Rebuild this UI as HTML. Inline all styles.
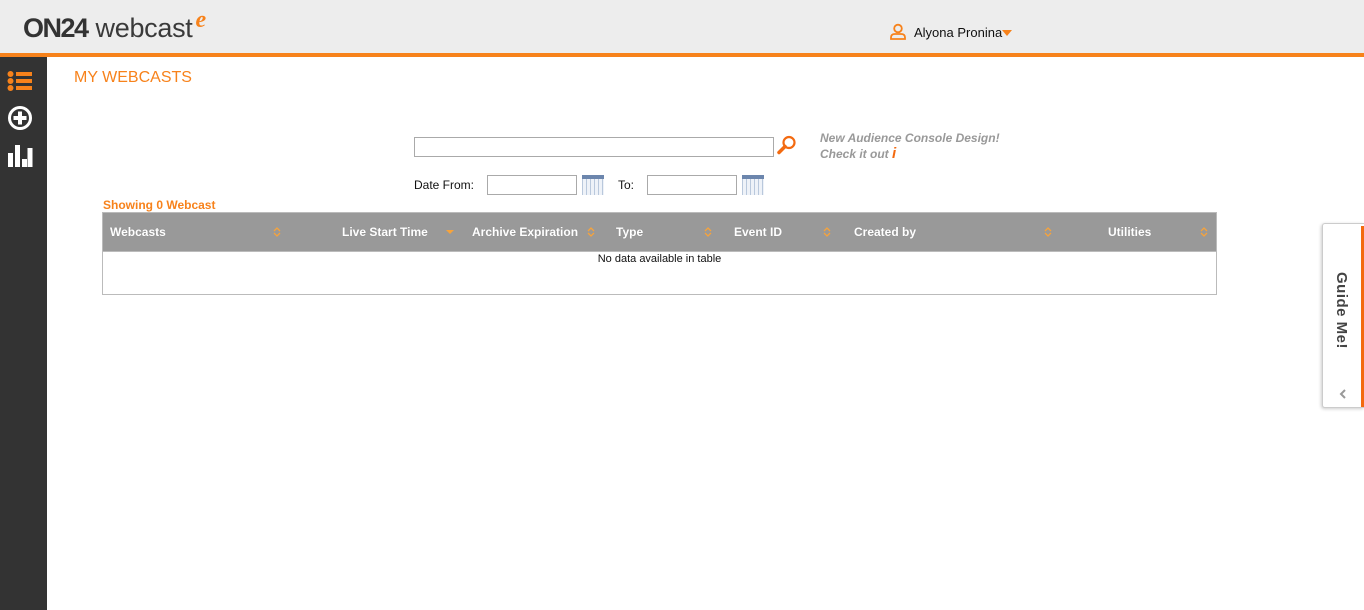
<!DOCTYPE html>
<html><head><meta charset="utf-8"><style>
*{margin:0;padding:0;box-sizing:border-box}
body{width:1364px;height:610px;overflow:hidden;background:#fff;font-family:"Liberation Sans",Arial,sans-serif;position:relative}
.hdr{position:absolute;left:0;top:0;width:1364px;height:53px;background:#ededed}
.bar{position:absolute;left:0;top:53px;width:1364px;height:4px;background:#f7821b}
.side{position:absolute;left:0;top:57px;width:47px;height:553px;background:#333}
.abs{position:absolute}
.th{position:absolute;top:0;height:39px;line-height:39px;color:#fff;font-weight:bold;font-size:12px;text-shadow:0 0 1px #888}
.sort{position:absolute;top:13px;width:8px;height:12px}
input.t{position:absolute;border:1px solid #aaa;background:#fff;height:20px}
.cal{position:absolute;width:22px;height:20px;background:repeating-linear-gradient(90deg,#b9c8dc 0 1px,#eef2f8 1px 4px),#eef2f8;border-top:4px solid #6c86ad}
</style></head><body>
<div class="hdr"></div><div class="bar"></div>
<div class="abs" style="left:23px;top:13px;font-size:27px;color:#333;white-space:nowrap"><b style="font-weight:bold;letter-spacing:-1.5px">ON24</b><span style="color:#3a3a3a;margin-left:8px;letter-spacing:-0.3px">webcast</span><i style="color:#f7821b;font-family:'Liberation Serif',serif;font-weight:bold;font-size:24px;position:relative;top:-10px;margin-left:3px">e</i></div>
<svg class="abs" style="left:889px;top:23px" width="18" height="18" viewBox="0 0 18 18"><circle cx="9" cy="5.5" r="3.8" fill="none" stroke="#f7821b" stroke-width="1.8"/><path d="M2 16v-1.5q0-3.5 4-3.5h6q4 0 4 3.5V16z" fill="none" stroke="#f7821b" stroke-width="1.8"/></svg>
<div class="abs" style="left:914px;top:25px;font-size:13px;color:#111">Alyona Pronina</div>
<div class="abs" style="left:1002px;top:30px;border-left:5px solid transparent;border-right:5px solid transparent;border-top:6px solid #f7821b"></div>
<div class="side"></div>
<svg class="abs" style="left:7px;top:70px" width="26" height="22"><g fill="#f7821b"><circle cx="3.5" cy="4" r="3"/><circle cx="3.5" cy="11" r="3"/><circle cx="3.5" cy="18" r="3"/><rect x="9" y="2" width="16" height="4"/><rect x="9" y="9" width="16" height="4"/><rect x="9" y="16" width="16" height="4"/></g></svg>
<svg class="abs" style="left:7px;top:106px" width="26" height="26"><circle cx="13" cy="12" r="10.5" fill="none" stroke="#fff" stroke-width="3"/><rect x="11" y="5.5" width="4" height="13" fill="#fff"/><rect x="6.5" y="10" width="13" height="4" fill="#fff"/></svg>
<svg class="abs" style="left:8px;top:145px" width="26" height="24"><g fill="#fff"><rect x="0" y="8" width="5" height="14"/><rect x="7" y="0" width="5" height="22"/><rect x="14" y="14" width="5" height="8"/><rect x="19.5" y="3" width="5" height="19"/></g></svg>
<div class="abs" style="left:74px;top:69px;font-size:16px;color:#f7821b">MY WEBCASTS</div>
<input class="t" style="left:414px;top:137px;width:360px">
<svg class="abs" style="left:776px;top:134px" width="22" height="22"><circle cx="13" cy="8.5" r="5.5" fill="none" stroke="#f36a10" stroke-width="2.2"/><path d="M9 12.5L3 18.5" stroke="#f36a10" stroke-width="3.5" stroke-linecap="round"/></svg>
<div class="abs" style="left:820px;top:131px;font-size:12px;line-height:15px;color:#999;font-style:italic;font-weight:bold">New Audience Console Design!<br>Check it out <span style="color:#f36a10;font-size:15px">i</span></div>
<div class="abs" style="left:414px;top:178px;font-size:12px;color:#111">Date From:</div>
<input class="t" style="left:487px;top:175px;width:90px">
<div class="cal" style="left:582px;top:175px"></div>
<div class="abs" style="left:618px;top:178px;font-size:12px;color:#111">To:</div>
<input class="t" style="left:647px;top:175px;width:90px">
<div class="cal" style="left:742px;top:175px"></div>
<div class="abs" style="left:103px;top:198px;font-size:12px;color:#f7821b;font-weight:bold">Showing 0 Webcast</div>
<div class="abs" style="left:102px;top:212px;width:1115px;height:83px;border:1px solid #bbb">
<div class="abs" style="left:0;top:0;width:1113px;height:39px;background:#999;border-bottom:1px solid #bbb">
<div class="th" style="left:7px">Webcasts</div>
<div class="th" style="left:239px">Live Start Time</div>
<div class="th" style="left:369px">Archive Expiration</div>
<div class="th" style="left:513px">Type</div>
<div class="th" style="left:631px">Event ID</div>
<div class="th" style="left:751px">Created by</div>
<div class="th" style="left:1005px">Utilities</div>
<svg class="sort" style="left:170px" viewBox="0 0 8 12"><path d="M1 5L4 2L7 5M1 7L4 10L7 7" fill="none" stroke="#f7a33b" stroke-width="1.3"/></svg>
<svg class="sort" style="left:343px" viewBox="0 0 8 12"><path d="M0 4h8L4 8z" fill="#f7a33b"/></svg>
<svg class="sort" style="left:484px" viewBox="0 0 8 12"><path d="M1 5L4 2L7 5M1 7L4 10L7 7" fill="none" stroke="#f7a33b" stroke-width="1.3"/></svg>
<svg class="sort" style="left:601px" viewBox="0 0 8 12"><path d="M1 5L4 2L7 5M1 7L4 10L7 7" fill="none" stroke="#f7a33b" stroke-width="1.3"/></svg>
<svg class="sort" style="left:720px" viewBox="0 0 8 12"><path d="M1 5L4 2L7 5M1 7L4 10L7 7" fill="none" stroke="#f7a33b" stroke-width="1.3"/></svg>
<svg class="sort" style="left:941px" viewBox="0 0 8 12"><path d="M1 5L4 2L7 5M1 7L4 10L7 7" fill="none" stroke="#f7a33b" stroke-width="1.3"/></svg>
<svg class="sort" style="left:1097px" viewBox="0 0 8 12"><path d="M1 5L4 2L7 5M1 7L4 10L7 7" fill="none" stroke="#f7a33b" stroke-width="1.3"/></svg>
</div>
<div class="abs" style="left:0;top:40px;width:1113px;text-align:center;font-size:11px;color:#111">No data available in table</div>
</div>
<div class="abs" style="left:1322px;top:223px;width:42px;height:185px;background:#fff;border:1px solid #ccc;border-right:none;border-radius:3px 0 0 3px;box-shadow:-1px 1px 3px rgba(0,0,0,.2)">
<div class="abs" style="right:0;top:2px;width:3px;height:181px;background:#f36a10"></div>
<div class="abs" style="left:3px;top:48px;width:30px;height:85px;writing-mode:vertical-rl;font-size:15px;font-weight:bold;color:#444;letter-spacing:0.5px;line-height:30px">Guide Me!</div>
<svg class="abs" style="left:15px;top:164px" width="10" height="12"><path d="M7 2L3 6L7 10" fill="none" stroke="#999" stroke-width="2"/></svg>
</div>
</body></html>
